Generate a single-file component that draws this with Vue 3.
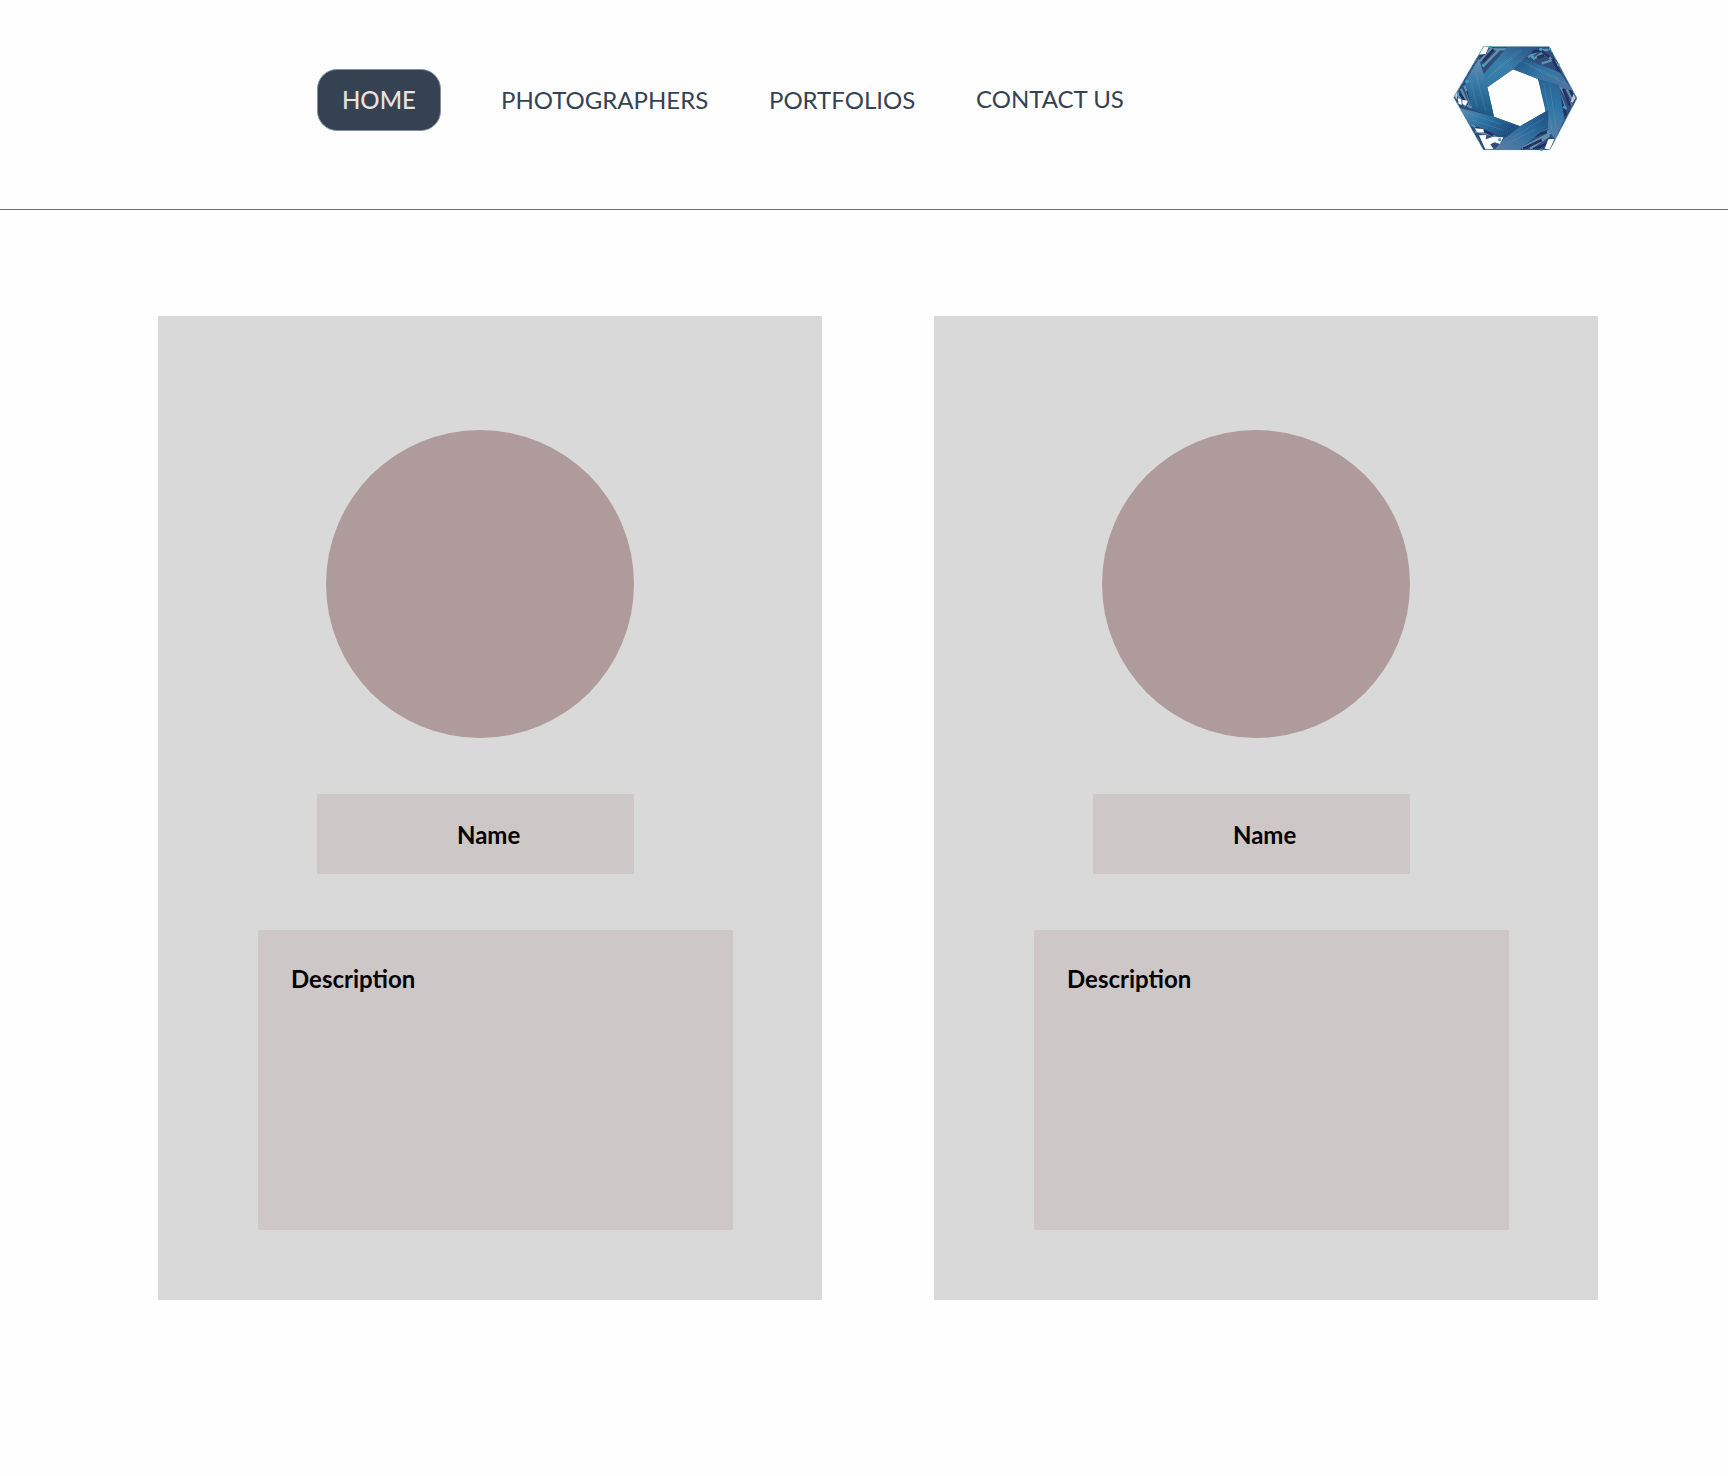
<script setup>
const links = [
  { label: 'HOME', key: 'home' },
  { label: 'PHOTOGRAPHERS', key: 'photographers' },
  { label: 'PORTFOLIOS', key: 'portfolios' },
  { label: 'CONTACT US', key: 'contact' },
]
const cards = [1, 2]
</script>

<template>
  <div class="page">
    <header class="header">
      <nav class="nav">
        <a v-for="link in links" :key="link.key" :class="['link', link.key]">{{ link.label }}</a>
      </nav>
      <svg class="logo" viewBox="0 0 450 390" aria-label="Logo">
        <defs>
          <linearGradient id="band-a" x1="0" y1="1" x2="1" y2="0">
            <stop offset="0" stop-color="#2b76a6" /><stop offset=".5" stop-color="#347ba5" /><stop offset="1" stop-color="#244f85" />
          </linearGradient>
          <linearGradient id="band-b" x1="0" y1="0" x2="1" y2="1">
            <stop offset="0" stop-color="#194f80" /><stop offset=".45" stop-color="#2d71a0" /><stop offset="1" stop-color="#526f9c" />
          </linearGradient>
          <linearGradient id="band-c" x1="0" y1="0" x2="0" y2="1">
            <stop offset="0" stop-color="#235f92" /><stop offset=".5" stop-color="#2872a4" /><stop offset="1" stop-color="#567ba5" />
          </linearGradient>
          <linearGradient id="band-d" x1="1" y1="0" x2="0" y2="1">
            <stop offset="0" stop-color="#184a7c" /><stop offset=".5" stop-color="#286b9d" /><stop offset="1" stop-color="#617aa4" />
          </linearGradient>
          <linearGradient id="band-e" x1="0" y1="0" x2="1" y2=".5">
            <stop offset="0" stop-color="#578bb0" /><stop offset=".5" stop-color="#266d9e" /><stop offset="1" stop-color="#17497b" />
          </linearGradient>
          <linearGradient id="band-f" x1="0" y1="0" x2="0" y2="1">
            <stop offset="0" stop-color="#628eb2" /><stop offset=".5" stop-color="#2c719f" /><stop offset="1" stop-color="#18527f" />
          </linearGradient>
          <clipPath id="hexagon"><path d="M40 190L130 37H328L412 193L330 349H130Z" /></clipPath>
          <pattern id="weave" width="7" height="7" patternUnits="userSpaceOnUse">
            <path d="M0 7L7 0" stroke="#9bc5d9" stroke-width="1" opacity=".32" />
          </pattern>
        </defs>
        <g clip-path="url(#hexagon)">
          <path d="M40 190L130 37H328L412 193L330 349H130ZM219 106L142 160L162 248L240 277L325 228L294 135Z" fill="#2b4775" fill-rule="evenodd" />
          <g fill="none" stroke="#5e8eae" stroke-width="7">
            <path d="M120 82L151 46H215M128 98L181 43M264 70L300 48H325M279 76L309 55L350 89M305 89L334 79M348 154L378 226M360 157L394 214M380 166L397 196" />
            <path d="M52 182L76 216M63 164L87 220M73 154L98 222M93 270L121 288L181 316M106 292L151 302M245 342L337 294M270 344L329 304M239 325L340 280" />
          </g>
          <g fill="none" stroke="#202958" stroke-width="8">
            <path d="M119 66L140 54M161 46L130 81M274 55L303 49L328 70M292 70L312 65M337 73L363 126M352 165L378 245M370 164L390 215M389 166L405 199" />
            <path d="M58 175L81 213M82 170L101 222M250 344L305 318M280 346L330 326M107 279L160 304M240 323L335 286" />
          </g>
          <g fill="#fff">
            <path d="M130 39L146 39L137 60L117 62ZM53 193L62 195L66 212L56 210ZM67 197L83 200L78 215L68 210ZM104 283L130 285L132 295L112 295ZM117 304L139 303L137 316L157 309L190 310L180 330L164 325L151 331L161 346H136ZM325 316L343 315L329 347L314 344Z" />
            <path d="M44 185L53 170L50 198ZM401 179L407 192L398 206L392 203Z" opacity=".7" />
          </g>
          <path d="M117 136L203 38H292L219 106L142 160Z" fill="url(#band-a)" />
          <path d="M219 106L256 74L361 116L397 170L365 161L294 135Z" fill="url(#band-b)" />
          <path d="M294 135L357 152L373 257L345 316L325 289L315 225Z" fill="url(#band-c)" />
          <path d="M325 228L324 277L238 347H163L199 307L240 277Z" fill="url(#band-d)" />
          <path d="M59 222L162 248L240 277L199 310L88 269Z" fill="url(#band-e)" />
          <path d="M117 73L142 160L162 248L97 226L75 142Z" fill="url(#band-f)" />
          <path d="M40 190L130 37H328L412 193L330 349H130ZM219 106L142 160L162 248L240 277L325 228L294 135Z" fill="url(#weave)" fill-rule="evenodd" />
          <g fill="none" stroke="#8dbad0" stroke-width="2" opacity=".3">
            <path d="M144 130L245 50M159 115L239 47M240 80L358 134M266 95L380 151M311 147L336 290M329 151L349 286M218 311L312 253M209 325L286 287M78 235L183 271M96 258L190 289M104 105L137 232M91 137L112 218" />
          </g>
          <path d="M40 190L130 37H328L412 193L330 349H130Z" fill="none" stroke="#65b8c9" stroke-width="4" stroke-dasharray="14 3 4 3" />
        </g>
        <g fill="#3ea3cf">
          <circle cx="151" cy="39" r="4" /><circle cx="130" cy="93" r="4" /><circle cx="278" cy="69" r="5" /><circle cx="302" cy="46" r="5" /><circle cx="330" cy="45" r="4" /><circle cx="355" cy="92" r="4" /><circle cx="374" cy="220" r="5" /><circle cx="81" cy="142" r="5" /><circle cx="54" cy="179" r="4" /><circle cx="91" cy="219" r="4" /><circle cx="179" cy="317" r="5" /><circle cx="324" cy="293" r="4" /><circle cx="304" cy="348" r="4" />
        </g>
      </svg>
    </header>
    <main class="cards">
      <article v-for="card in cards" :key="card" class="card">
        <div class="avatar"></div>
        <div class="name">Name</div>
        <div class="description">Description</div>
      </article>
    </main>
  </div>
</template>

<style>
body {
  margin: 0;
  background: #fefefe;
}
</style>

<style scoped>
.page {
  box-sizing: border-box;
  width: 1728px;
  height: 1476px;
  overflow: hidden;
  font-family: Lato, sans-serif;
  font-size: 24px;
  line-height: 29px;
}
.header {
  box-sizing: border-box;
  height: 210px;
  border-bottom: 1px solid #6c6c6c;
  display: flex;
  justify-content: space-between;
  align-items: flex-start;
  padding: 34px 138px 0 317px;
}
.nav {
  display: flex;
  padding-top: 35px;
  color: #354252;
  white-space: nowrap;
}
.link {
  margin-top: 16px;
}
.home {
  box-sizing: border-box;
  width: 124px;
  height: 62px;
  margin: 0 60px 0 0;
  padding: 15px 0 0 24px;
  border: 1px solid #84909a;
  border-radius: 20px;
  background: #354252;
  color: #ebe0de;
  font-weight: 500;
}
.photographers {
  width: 268px;
}
.portfolios {
  width: 207px;
}
.contact {
  margin-top: 15px;
}
.logo {
  width: 150px;
  height: 130px;
}
.cards {
  display: flex;
  gap: 112px;
  padding: 106px 0 0 158px;
}
.card {
  box-sizing: border-box;
  width: 664px;
  height: 984px;
  padding-top: 114px;
  background: #d9d9d9;
}
.avatar {
  width: 308px;
  height: 308px;
  margin-left: 168px;
  border-radius: 50%;
  background: #af9b9b;
}
.name,
.description {
  box-sizing: border-box;
  background: #cec7c7;
  color: #000;
  font-weight: 700;
}
.name {
  width: 317px;
  height: 80px;
  margin: 56px 0 0 159px;
  padding: 26px 0 0 140px;
}
.description {
  width: 475px;
  height: 300px;
  margin: 56px 0 0 100px;
  padding: 34px 0 0 33px;
}
</style>
